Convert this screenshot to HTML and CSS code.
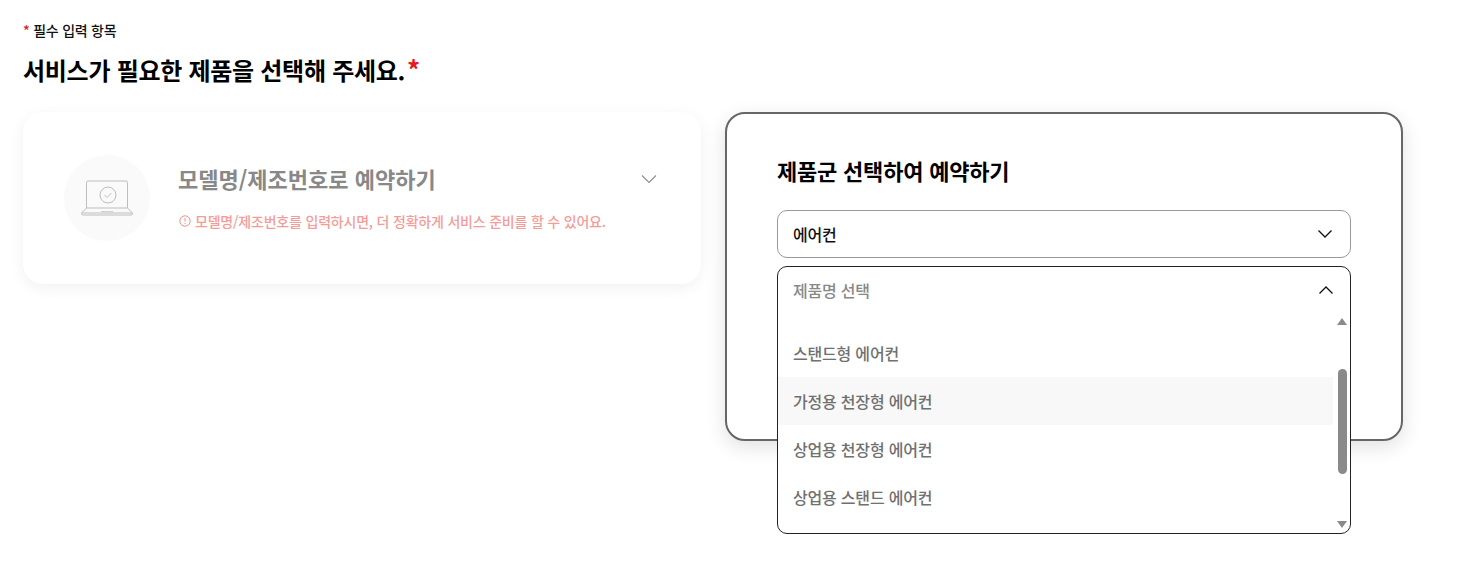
FILE: index.html
```html
<!DOCTYPE html>
<html lang="ko">
<head>
<meta charset="utf-8">
<title>제품 선택</title>
<link rel="stylesheet" href="styles.css">
</head>
<body>
<main class="page">
  <p class="note"><span class="star">*</span> 필수 입력 항목</p>
  <h1 class="heading">서비스가 필요한 제품을 선택해 주세요.<span class="heading-star">*</span></h1>
  <div class="columns">
    <section class="card card-muted">
      <div class="circle">
        <svg class="laptop" width="54" height="38" viewBox="0 0 54 38" fill="none" stroke="#bdbdbd" stroke-width="1">
          <path d="M6.500 30V4.500a1.500 1.500 0 0 1 1.500-1.500h38a1.500 1.500 0 0 1 1.500 1.500V30"/>
          <path d="M6.500 30h41l5 5v.8a1.200 1.200 0 0 1-1.200 1.200H2.700a1.200 1.200 0 0 1-1.200-1.200V35z"/>
          <path d="M2 35h50"/>
          <path d="M21 33.500h12" stroke="#d0d0d0"/>
          <circle cx="28" cy="17" r="8"/>
          <path d="M24.500 17l2.500 2.500 4.500-4.500"/>
        </svg>
      </div>
      <div class="card-text">
        <h2 class="card-title">모델명/제조번호로 예약하기</h2>
        <p class="card-hint">
          <svg class="hint-icon" width="12" height="12" viewBox="0 0 12 12" fill="none" stroke="#f2908e" stroke-width="1">
            <circle cx="6" cy="6" r="5.200"/>
            <path d="M6 3v3.600M6 8v1"/>
          </svg>
          모델명/제조번호를 입력하시면, 더 정확하게 서비스 준비를 할 수 있어요.
        </p>
      </div>
      <svg class="card-chevron" width="16" height="10" viewBox="0 0 16 10" fill="none" stroke="#8c8c8c" stroke-width="1.100">
        <path d="M1 1.500l7 7 7-7"/>
      </svg>
    </section>

    <section class="card card-active">
      <h2 class="select-title">제품군 선택하여 예약하기</h2>
      <div class="select select-closed">
        <span>에어컨</span>
        <svg width="16" height="10" viewBox="0 0 16 10" fill="none" stroke="#111" stroke-width="1.300"><path d="M1.500 1.500L8 8l6.500-6.500"/></svg>
      </div>
      <div class="select-slot">
        <div class="dropdown">
          <div class="select select-open">
            <span>제품명 선택</span>
            <svg width="16" height="10" viewBox="0 0 16 10" fill="none" stroke="#111" stroke-width="1.300"><path d="M1.500 8.500L8 2l6.500 6.500"/></svg>
          </div>
          <div class="list-wrap">
            <ul class="list">
              <li class="item">스탠드형 에어컨</li>
              <li class="item item-hover">가정용 천장형 에어컨</li>
              <li class="item">상업용 천장형 에어컨</li>
              <li class="item">상업용 스탠드 에어컨</li>
            </ul>
            <div class="scrollbar">
              <span class="arrow arrow-up"></span>
              <span class="thumb"></span>
              <span class="arrow arrow-down"></span>
            </div>
          </div>
        </div>
      </div>
    </section>
  </div>
</main>
</body>
</html>
```
FILE: styles.css
```css
* { box-sizing: border-box; }
html, body { margin: 0; padding: 0; background: #fff; }
body {
  font-family: "Noto Sans CJK KR", "Noto Sans", sans-serif;
  color: #000;
  min-height: 567px;
}
.page { padding: 20px 0 0 23px; }
.note {
  margin: 0;
  font-size: 14px;
  line-height: 20px;
  font-weight: 500;
  letter-spacing: -0.25px;
  color: #111;
}
.star { color: #e0201c; }
.heading {
  margin: 12px 0 0;
  font-size: 24px;
  line-height: 36px;
  font-weight: 700;
  letter-spacing: -0.28px;
}
.heading-star {
  color: #e8191c;
  margin-left: 2px;
  font-size: 26px;
  line-height: 20px;
}
.columns {
  display: flex;
  align-items: flex-start;
  gap: 24px;
  margin-top: 24px;
}
.card {
  width: 678px;
  border-radius: 20px;
  background: #fff;
}
.card-muted {
  height: 172px;
  display: flex;
  align-items: flex-start;
  padding: 43px 44px 0 41px;
  box-shadow: 0 4px 16px rgba(0, 0, 0, 0.06);
}
.circle {
  width: 86px;
  height: 86px;
  flex: none;
  border-radius: 50%;
  background: #fafafa;
  display: flex;
  align-items: center;
  justify-content: center;
}
.laptop { margin-top: -2px; }
.card-text { margin-left: 28px; flex: 1; }
.card-title {
  margin: 6px 0 0;
  font-size: 22px;
  line-height: 34px;
  font-weight: 700;
  color: #888;
}
.card-hint {
  margin: 16px 0 0;
  font-size: 14px;
  line-height: 20px;
  font-weight: 500;
  color: #f49c9a;
  letter-spacing: -0.2px;
  display: flex;
  align-items: center;
  gap: 4px;
}
.hint-icon { margin-left: 1px; }
.card-chevron { flex: none; margin-top: 19px; }
.card-active {
  height: 329px;
  border: 2px solid #666;
  padding: 40px 50px 0;
  box-shadow: 0 6px 20px rgba(0, 0, 0, 0.12);
}
.select-title {
  margin: 0;
  font-size: 22px;
  line-height: 32px;
  font-weight: 700;
  letter-spacing: -0.2px;
}
.select {
  height: 48px;
  display: flex;
  align-items: center;
  justify-content: space-between;
  padding: 0 17px 0 15px;
  font-size: 16px;
  letter-spacing: -0.2px;
  font-weight: 500;
}
.select-closed {
  margin-top: 24px;
  border: 1px solid #999;
  border-radius: 10px;
  color: #111;
}
.select-slot {
  position: relative;
  height: 48px;
  margin-top: 8px;
}
.dropdown {
  position: absolute;
  top: 0;
  left: 0;
  width: 100%;
  height: 268px;
  display: flex;
  flex-direction: column;
  background: #fff;
  border: 1px solid #222;
  border-radius: 10px;
}
.select-open {
  flex: none;
  height: 47px;
  padding-right: 16px;
  padding-bottom: 2px;
  color: #888;
}
.list-wrap { flex: 1; display: flex; min-height: 0; }
.list {
  flex: 1;
  margin: 0;
  padding: 15px 0 0;
  list-style: none;
}
.item {
  height: 48px;
  display: flex;
  align-items: center;
  padding-left: 15px;
  font-size: 16px;
  letter-spacing: -0.2px;
  font-weight: 500;
  color: #707070;
}
.item-hover { background: #f8f8f8; }
.scrollbar {
  flex: none;
  width: 17px;
  padding: 4px 3px 5px 4px;
  display: flex;
  flex-direction: column;
  align-items: center;
}
.arrow {
  width: 0;
  height: 0;
  flex: none;
  border-left: 5px solid transparent;
  border-right: 5px solid transparent;
}
.arrow-up { border-bottom: 7px solid #8a8a8a; }
.arrow-down { border-top: 7px solid #8a8a8a; margin-top: 47px; }
.thumb {
  width: 9px;
  height: 105px;
  flex: none;
  margin-top: 44px;
  border-radius: 5px;
  background: #8a8a8a;
}
```
